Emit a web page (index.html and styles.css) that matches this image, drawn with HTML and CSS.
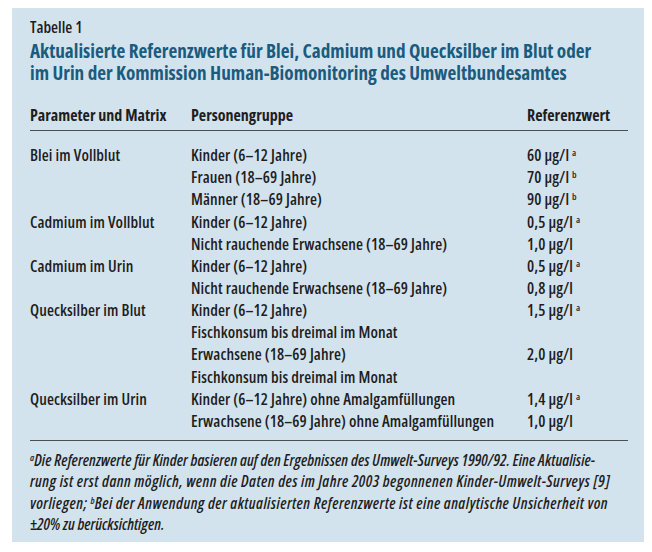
FILE: index.html
```html
<!DOCTYPE html>
<html lang="de">
<head>
<meta charset="utf-8">
<title>Tabelle 1</title>
<link rel="stylesheet" href="styles.css">
</head>
<body>
<div class="box">
  <div class="caption">Tabelle 1</div>
  <h1 class="title"><span class="line">Aktualisierte Referenzwerte für Blei, Cadmium und Quecksilber im Blut oder</span><span class="line">im Urin der Kommission Human-Biomonitoring des Umweltbundesamtes</span></h1>
  <div class="head">
    <div>Parameter und Matrix</div>
    <div>Personengruppe</div>
    <div>Referenzwert</div>
  </div>
  <div class="rows">
    <div class="p">Blei im Vollblut</div><div>Kinder (6–12 Jahre)</div><div>60 µg/l <sup>a</sup></div>
    <div class="p"></div><div>Frauen (18–69 Jahre)</div><div>70 µg/l <sup>b</sup></div>
    <div class="p"></div><div>Männer (18–69 Jahre)</div><div>90 µg/l <sup>b</sup></div>
    <div class="p">Cadmium im Vollblut</div><div>Kinder (6–12 Jahre)</div><div>0,5 µg/l <sup>a</sup></div>
    <div class="p"></div><div>Nicht rauchende Erwachsene (18–69 Jahre)</div><div>1,0 µg/l</div>
    <div class="p">Cadmium im Urin</div><div>Kinder (6–12 Jahre)</div><div>0,5 µg/l <sup>a</sup></div>
    <div class="p"></div><div>Nicht rauchende Erwachsene (18–69 Jahre)</div><div>0,8 µg/l</div>
    <div class="p">Quecksilber im Blut</div><div>Kinder (6–12 Jahre)</div><div>1,5 µg/l <sup>a</sup></div>
    <div class="p"></div><div>Fischkonsum bis dreimal im Monat</div><div></div>
    <div class="p"></div><div>Erwachsene (18–69 Jahre)</div><div>2,0 µg/l</div>
    <div class="p"></div><div>Fischkonsum bis dreimal im Monat</div><div></div>
    <div class="p">Quecksilber im Urin</div><div>Kinder (6–12 Jahre) ohne Amalgamfüllungen</div><div>1,4 µg/l <sup>a</sup></div>
    <div class="p"></div><div>Erwachsene (18–69 Jahre) ohne Amalgamfüllungen</div><div>1,0 µg/l</div>
  </div>
  <p class="notes"><span class="line l1"><sup>a</sup>Die Referenzwerte für Kinder basieren auf den Ergebnissen des Umwelt-Surveys 1990/92. Eine Aktualisie-</span><span class="line wide">rung ist erst dann möglich, wenn die Daten des im Jahre 2003 begonnenen Kinder-Umwelt-Surveys [9]</span><span class="line wide">vorliegen; <sup>b</sup>Bei der Anwendung der aktualisierten Referenzwerte ist eine analytische Unsicherheit von</span><span class="line">±20% zu berücksichtigen.</span></p>
</div>
</body>
</html>
```
FILE: styles.css
```css
html, body {
  margin: 0;
  padding: 0;
  background: #ffffff;
}
body {
  font-family: "Open Sans", "DejaVu Sans", sans-serif;
  font-stretch: 75%;
  color: #1e1e1e;
}
.box {
  margin: 8px 8px 10px 12px;
  width: 632px;
  height: 534px;
  box-sizing: border-box;
  padding: 11px 16px 0 18px;
  background: #d3e3ee;
  overflow: hidden;
}
.caption {
  font-size: 16px;
  line-height: 16px;
  font-weight: 600;
}
.title {
  margin: 5px 0 0 0;
  font-size: 19.2px;
  line-height: 22px;
  font-weight: bold;
  color: #1b5b7d;
}
.head {
  margin-top: 20px;
  display: grid;
  grid-template-columns: 161px 336px 1fr;
  font-size: 16px;
  line-height: 22px;
  font-weight: bold;
  padding-bottom: 4px;
  border-bottom: 1.5px solid #4a4f54;
}
.rows {
  margin-top: 13px;
  padding-bottom: 8px;
  display: grid;
  grid-template-columns: 161px 336px 1fr;
  grid-auto-rows: 22.17px;
  align-items: center;
  font-size: 16px;
  letter-spacing: 0.1px;
  line-height: 22px;
  font-weight: 600;
  border-bottom: 1.5px solid #4a4f54;
}
sup {
  font-size: 9.5px;
  line-height: 0;
  vertical-align: 5px;
  letter-spacing: 0;
}
.notes {
  margin: 9px 0 0 0;
  font-size: 15.8px;
  line-height: 21.3px;
  font-style: italic;
  font-weight: 600;
}
.line {
  display: block;
  white-space: nowrap;
}
.notes .l1 {
  letter-spacing: 0.07px;
}
.notes .wide {
  letter-spacing: 0.45px;
}
```
